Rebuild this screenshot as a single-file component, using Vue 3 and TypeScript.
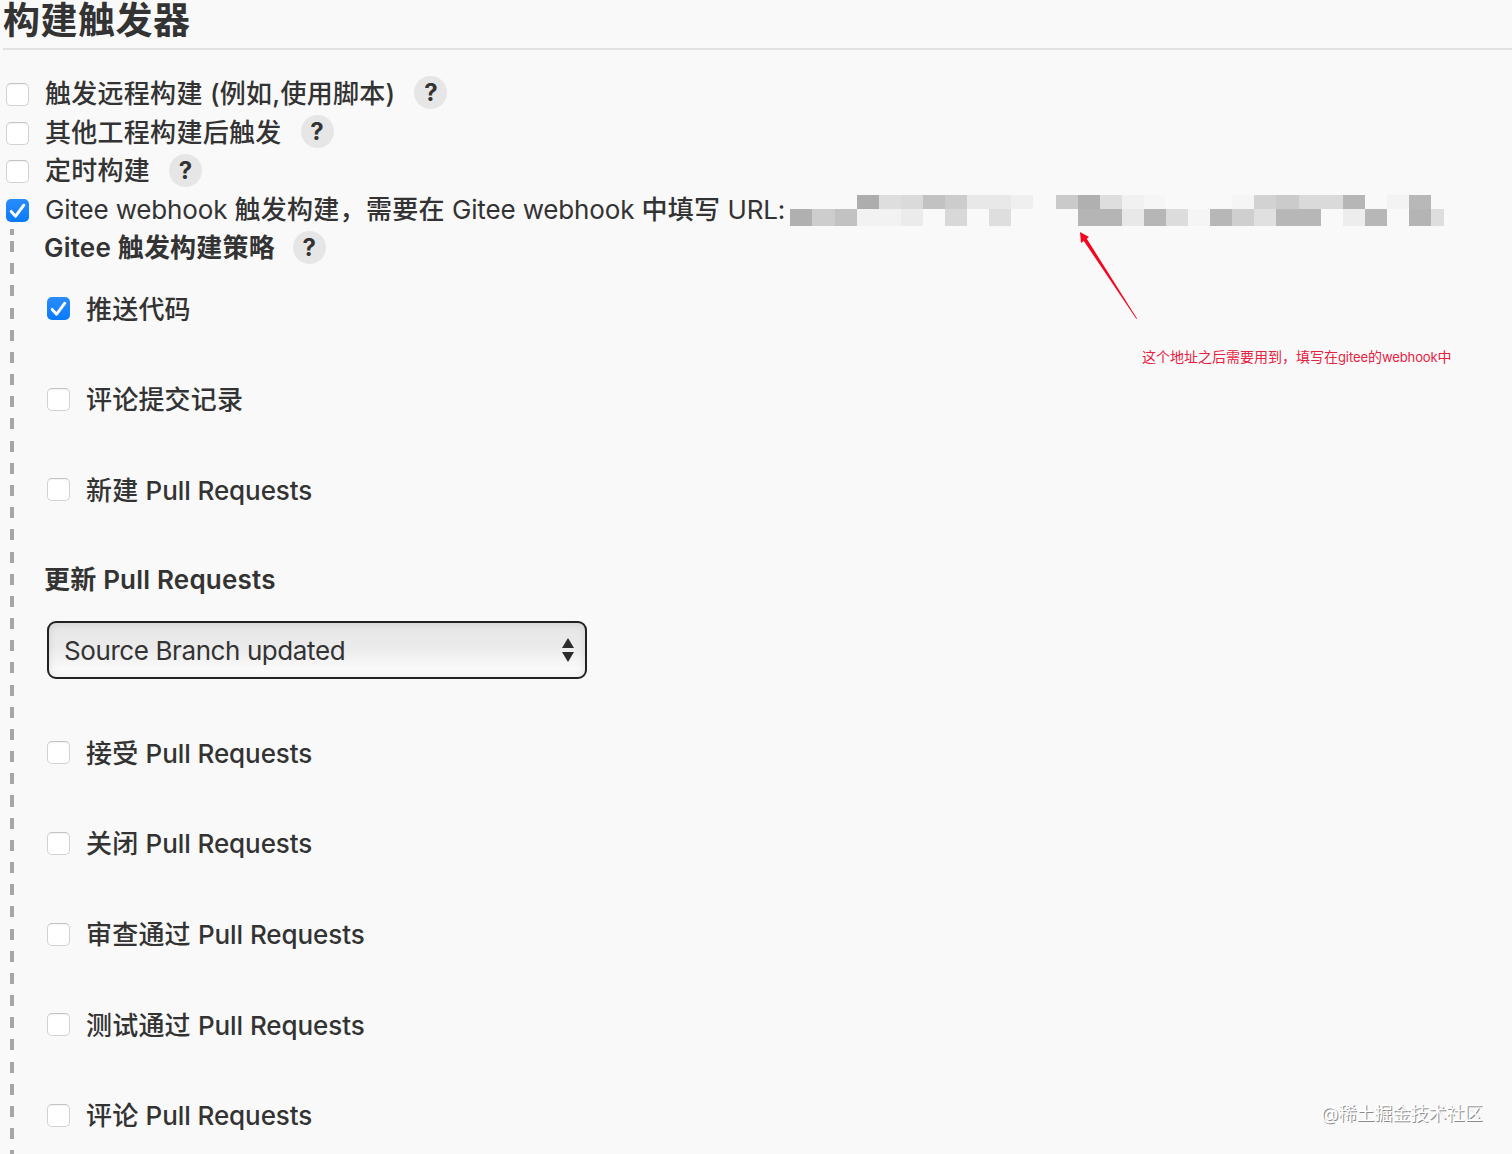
<template>
  <main class="page">
    <h1 class="heading">构建触发器</h1>

    <section class="triggers">
      <div v-for="trigger in triggers" :key="trigger.label" class="trigger-row">
        <span class="checkbox" :class="{ checked: trigger.checked }" role="checkbox" :aria-checked="trigger.checked">
          <svg v-if="trigger.checked" viewBox="0 0 23 23" class="check-icon">
            <path d="M5.2 12.4 9.6 17.2 17.8 6.2" />
          </svg>
        </span>
        <span class="trigger-label">
          <span v-for="(run, i) in runs(trigger.label)" :key="i" :class="{ latin: run.latin }">{{ run.text }}</span>
        </span>
        <span v-if="trigger.help" class="help">?</span>
        <span v-if="trigger.masked" class="mosaic">
          <i v-for="(color, i) in mosaic" :key="i" :style="{ background: color }" />
        </span>
      </div>
    </section>

    <section class="nested">
      <div class="rail" />
      <div class="options">
        <div class="strategy">
          <span class="strategy-label">Gitee 触发构建策略</span>
          <span class="help">?</span>
        </div>

        <template v-for="option in options" :key="option.label">
          <div v-if="option.select" class="update">
            <div class="update-title">{{ option.label }}</div>
            <div class="select">
              <span class="select-value">{{ option.select }}</span>
              <svg class="select-arrows" viewBox="0 0 12 24">
                <path d="M6 0 12 10H0ZM0 14H12L6 24Z" />
              </svg>
            </div>
          </div>
          <div v-else class="option-row">
            <span class="checkbox" :class="{ checked: option.checked }" role="checkbox" :aria-checked="!!option.checked">
              <svg v-if="option.checked" viewBox="0 0 23 23" class="check-icon">
                <path d="M5.2 12.4 9.6 17.2 17.8 6.2" />
              </svg>
            </span>
            <span class="option-label">
              <span v-for="(run, i) in runs(option.label)" :key="i" :class="{ latin: run.latin }">{{ run.text }}</span>
            </span>
          </div>
        </template>
      </div>
    </section>

    <svg class="arrow" viewBox="0 0 60 90">
      <path d="M1 0 10 5 7.8 6.8 58 86.5 57.4 87 4.8 9 2 11Z" />
    </svg>
    <div class="note">
      <span v-for="(run, i) in runs(note)" :key="i" :class="{ latin: run.latin }">{{ run.text }}</span>
    </div>
    <div class="watermark">@稀土掘金技术社区</div>
  </main>
</template>

<script setup lang="ts">
interface Trigger {
  label: string;
  checked: boolean;
  help?: boolean;
  masked?: boolean;
}

interface Option {
  label: string;
  checked?: boolean;
  select?: string;
}

interface Run {
  text: string;
  latin: boolean;
}

const triggers: Trigger[] = [
  { label: '触发远程构建 (例如,使用脚本)', checked: false, help: true },
  { label: '其他工程构建后触发', checked: false, help: true },
  { label: '定时构建', checked: false, help: true },
  { label: 'Gitee webhook 触发构建，需要在 Gitee webhook 中填写 URL:', checked: true, masked: true },
];

const options: Option[] = [
  { label: '推送代码', checked: true },
  { label: '评论提交记录' },
  { label: '新建 Pull Requests' },
  { label: '更新 Pull Requests', select: 'Source Branch updated' },
  { label: '接受 Pull Requests' },
  { label: '关闭 Pull Requests' },
  { label: '审查通过 Pull Requests' },
  { label: '测试通过 Pull Requests' },
  { label: '评论 Pull Requests' },
];

const note = '这个地址之后需要用到，填写在gitee的webhook中';

// Two rows of 30 grey levels; "--" leaves the cell empty.
const MASK_ROWS = [
  '-- -- -- ad de da c2 cc e8 e8 ef -- ca b0 de f1 f6 -- -- -- f5 d2 cb da da b6 -- f3 b8 --',
  'b0 cd c2 f2 f2 eb -- d8 -- de -- -- -- b5 b5 e8 b6 dc f5 b7 cf e0 b7 b7 -- ed b7 -- b4 de',
];

const mosaic = MASK_ROWS.flatMap((row) =>
  row.split(' ').map((level) => (level === '--' ? 'transparent' : `#${level.repeat(3)}`)),
);

// Latin words get their own tracking, so a label is split at them.
function runs(label: string): Run[] {
  return label
    .split(/([A-Za-z:][A-Za-z: ]*)/)
    .filter(Boolean)
    .map((text) => ({ text, latin: /[A-Za-z]/.test(text) }));
}
</script>

<style>
body {
  margin: 0;
  background: #f9f9f9;
}
</style>

<style scoped>
.page {
  position: relative;
  display: flex;
  flex-direction: column;
  box-sizing: border-box;
  width: 1512px;
  height: 1154px;
  overflow: hidden;
  background: #f9f9f9;
  color: #333;
  font-family: Inter, "Noto Sans CJK SC", sans-serif;
  font-size: 26px;
  letter-spacing: 0.2px;
  white-space: nowrap;
}

.heading {
  flex: none;
  box-sizing: border-box;
  height: 50px;
  margin: 0 0 0 3px;
  border-bottom: 2px solid #e1e1e1;
  font-size: 37px;
  font-weight: 700;
  letter-spacing: 0.5px;
  line-height: 42px;
}

.triggers {
  flex: none;
  padding: 24px 0 0 6px;
}

.trigger-row {
  display: flex;
  align-items: center;
  height: 38.7px;
}

.checkbox {
  flex: none;
  box-sizing: border-box;
  width: 23px;
  height: 23px;
  border: 1px solid #d2d2d2;
  border-top-color: #c4c4c4;
  border-radius: 5px;
  background: #fff;
  box-shadow: inset 0 1px 1px #0000000d;
}

.trigger-row .checkbox {
  margin-top: 2px;
}

.checkbox.checked {
  border: 0;
  background: linear-gradient(#2b8cfa, #087aff);
  box-shadow: none;
}

.check-icon {
  display: block;
  width: 23px;
  height: 23px;
  fill: none;
  stroke: #fff;
  stroke-linecap: round;
  stroke-linejoin: round;
  stroke-width: 2.9;
}

.trigger-label {
  margin: 0 0 4px 16px;
  font-weight: 500;
  letter-spacing: 0.28px;
  white-space: pre;
}

.trigger-label .latin {
  font-weight: 400;
  letter-spacing: -0.15px;
}

.help {
  flex: none;
  width: 33px;
  height: 33px;
  margin: 0 0 1px 19px;
  border-radius: 50%;
  background: #e6e6e6;
  font-size: 24px;
  font-weight: 700;
  line-height: 33px;
  text-align: center;
}

.mosaic {
  display: grid;
  flex: none;
  grid-template-rows: 14px 17.5px;
  grid-template-columns: repeat(29, 22.1px) 12.5px;
  margin: 2px 68.4px 0 auto;
}

.nested {
  display: flex;
  flex: 1;
  min-height: 0;
}

.rail {
  flex: none;
  width: 4px;
  margin-left: 10px;
  background:
    linear-gradient(#a6a6a6, #a6a6a6) 0 0 / 4px 6px no-repeat,
    repeating-linear-gradient(#a6a6a6 0 11px, transparent 11px 22.18px) 0 12.6px / 4px 1000px no-repeat;
}

.options {
  display: flex;
  flex-direction: column;
  padding-left: 33px;
}

.strategy,
.option-row {
  display: flex;
  flex: none;
  align-items: center;
}

.strategy {
  height: 37px;
  margin-left: -3px;
  font-weight: 600;
}

.strategy-label {
  margin-bottom: 3px;
}

.strategy .help {
  margin: 0 0 0 18px;
}

.option-row {
  height: 90.7px;
}

.option-label {
  margin: 0 0 3px 16px;
  font-weight: 500;
  white-space: pre;
}

.option-label .latin {
  font-weight: 450;
  letter-spacing: -0.08px;
}

.strategy + .option-row {
  margin-top: -2.5px;
}

.update {
  display: flex;
  flex: none;
  flex-direction: column;
  height: 172px;
}

.update-title {
  margin: 25px 0 0 -3px;
  font-weight: 600;
  line-height: 40px;
}

.select {
  display: flex;
  align-items: center;
  justify-content: space-between;
  box-sizing: border-box;
  width: 540px;
  height: 58px;
  margin-top: 21px;
  padding: 0 11px 0 15px;
  border: 2px solid #222;
  border-radius: 9px;
  background: linear-gradient(#e6e6e6, #ebebeb 45%, #fff);
  box-shadow: inset 0 0 8px #0000001c;
}

.select-value {
  letter-spacing: -0.41px;
}

.select-arrows {
  width: 12px;
  height: 24px;
  fill: #2c2c2c;
}

.arrow {
  position: absolute;
  top: 232px;
  left: 1079px;
  width: 60px;
  height: 90px;
  fill: #f5061f;
}

.note {
  position: absolute;
  top: 347px;
  left: 1142px;
  color: #e6213f;
  font-size: 14px;
  letter-spacing: 0;
  line-height: 20px;
}

.note .latin {
  font-size: 13px;
  letter-spacing: -0.1px;
}

.watermark {
  position: absolute;
  top: 1101px;
  left: 1321px;
  color: #fff;
  font-size: 18px;
  letter-spacing: 0;
  line-height: 26px;
  text-shadow: 1px 1px 0 #8c8c8c;
}
</style>
